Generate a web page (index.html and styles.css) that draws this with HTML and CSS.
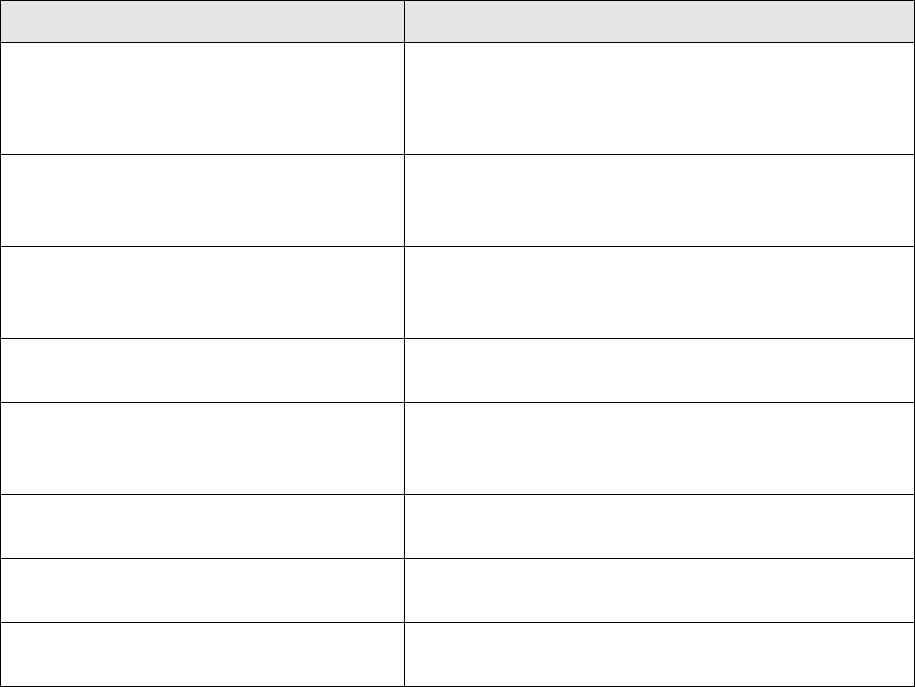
FILE: index.html
```html
<!DOCTYPE html>
<html>
<head>
<meta charset="utf-8">
<link rel="stylesheet" href="styles.css">
</head>
<body>
<table class="grid">
  <colgroup><col class="c1"><col class="c2"></colgroup>
  <thead>
    <tr class="h42"><th></th><th></th></tr>
  </thead>
  <tbody>
    <tr class="h112"><td></td><td></td></tr>
    <tr class="h92"><td></td><td></td></tr>
    <tr class="h92"><td></td><td></td></tr>
    <tr class="h64"><td></td><td></td></tr>
    <tr class="h92"><td></td><td></td></tr>
    <tr class="h64"><td></td><td></td></tr>
    <tr class="h64"><td></td><td></td></tr>
    <tr class="h64"><td></td><td></td></tr>
  </tbody>
</table>
</body>
</html>
```
FILE: styles.css
```css
html, body {
  margin: 0;
  padding: 0;
  background: #ffffff;
  font-family: "Liberation Sans", Arial, sans-serif;
}
.grid {
  border-collapse: collapse;
  table-layout: fixed;
  width: 914px;
}
.c1 { width: 404px; }
.c2 { width: 510px; }
.grid th, .grid td {
  border: 1px solid #000000;
  padding: 0;
}
.grid th {
  background: #e6e6e6;
}
.h42 { height: 42px; }
.h112 { height: 112px; }
.h92 { height: 92px; }
.h64 { height: 64px; }
```
